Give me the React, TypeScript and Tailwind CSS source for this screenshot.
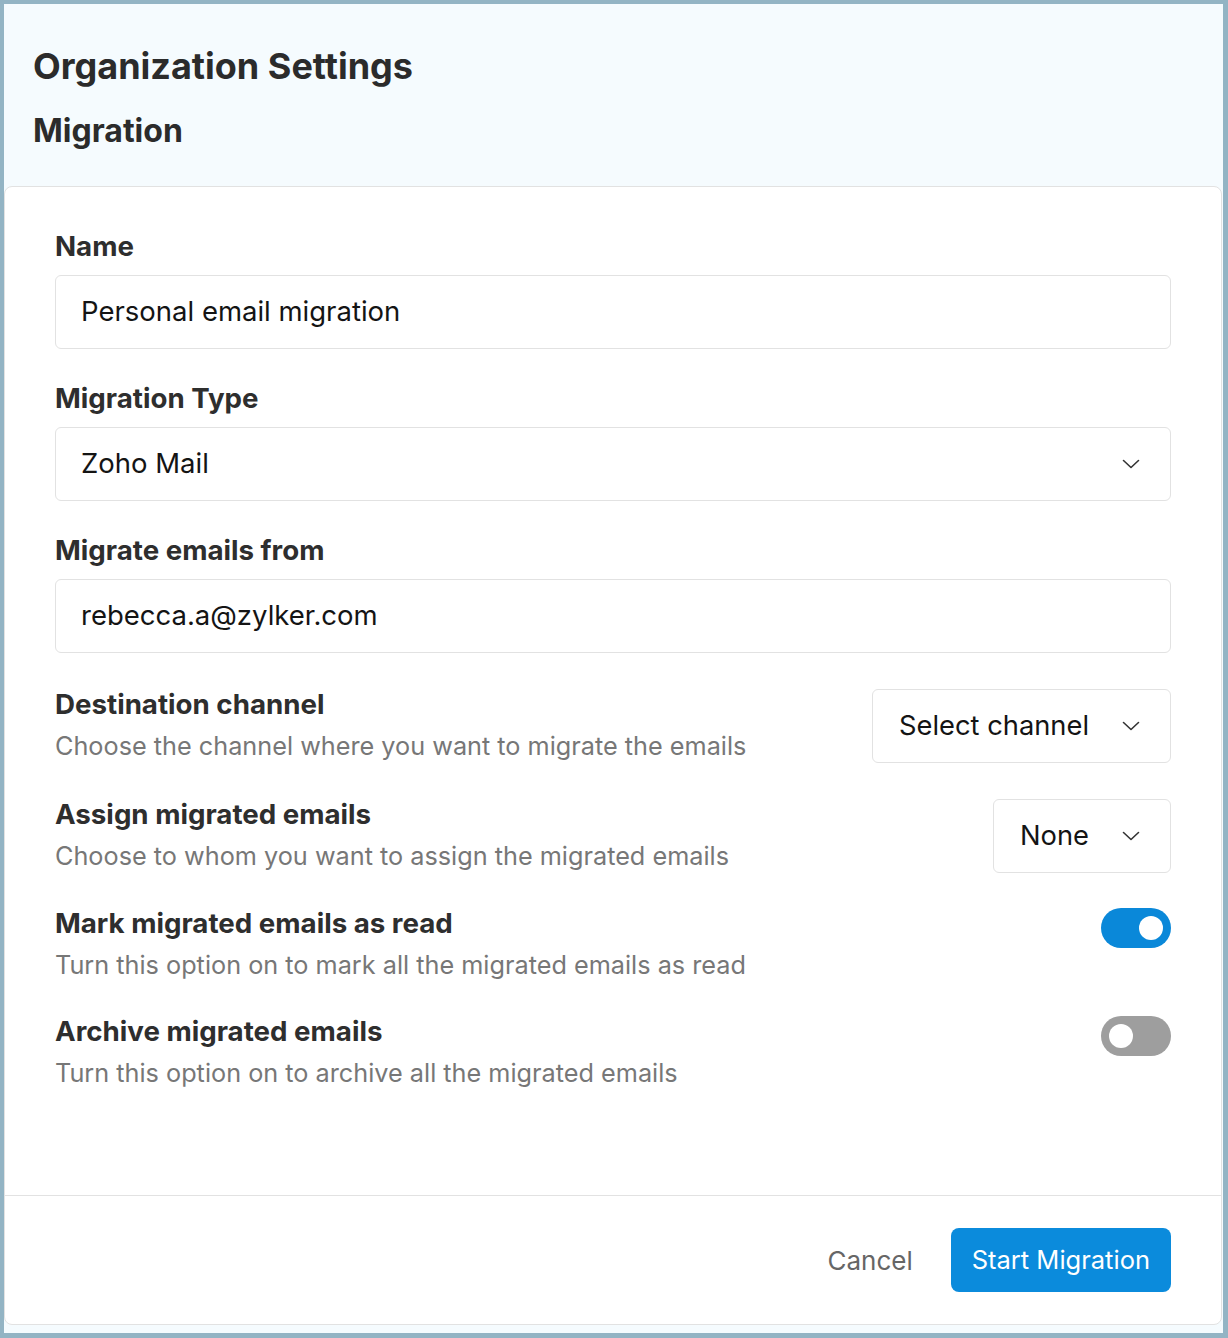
import React, { useState } from "react";

const FONT = { fontFamily: "Inter, 'Noto Sans', sans-serif" };

const Chevron = () => (
  <svg width="18" height="10" viewBox="0 0 18 10" fill="none" className="shrink-0">
    <path d="M1.5 1.5 L9 8.5 L16.5 1.5" stroke="#333" strokeWidth="1.6" strokeLinecap="round" strokeLinejoin="round" />
  </svg>
);

const Toggle = ({ on, onClick }: { on: boolean; onClick: () => void }) => (
  <button
    onClick={onClick}
    className={`relative h-[40px] w-[70px] shrink-0 rounded-full ${on ? "bg-[#0a88d9]" : "bg-[#9e9e9e]"}`}
  >
    <span
      className={`absolute top-[8px] h-[24px] w-[24px] rounded-full bg-white ${on ? "left-[38px]" : "left-[8px]"}`}
    />
  </button>
);

const Field = ({ label, value, select, first }: { label: string; value: string; select?: boolean; first?: boolean }) => (
  <div className={first ? "" : "mt-[33px]"}>
    <div className="text-[27.7px] font-bold leading-[32px] text-[#2e2e2e]">{label}</div>
    <div className="mt-[13px] flex h-[74px] items-center justify-between rounded-md border border-[#e2e2e2] bg-white pl-[25px] pr-[30px]">
      <span className="text-[27.5px] text-[#141414]">{value}</span>
      {select && <Chevron />}
    </div>
  </div>
);

const OptionRow = ({ title, sub, right, className }: { title: string; sub: string; right: React.ReactNode; className?: string }) => (
  <div className={`flex items-start justify-between ${className ?? ""}`}>
    <div>
      <div className="text-[27.7px] font-bold leading-[30px] text-[#2e2e2e]">{title}</div>
      <div className="mt-[10px] text-[25.25px] leading-[34px] text-[#777777]">{sub}</div>
    </div>
    {right}
  </div>
);

const Dropdown = ({ value }: { value: string }) => (
  <div className="flex h-[74px] items-center rounded-md border border-[#e2e2e2] bg-white pl-[26px] pr-[30px]">
    <span className="text-[27.3px] text-[#141414]">{value}</span>
    <span className="ml-[33px]">
      <Chevron />
    </span>
  </div>
);

export default function App() {
  const [markRead, setMarkRead] = useState(true);
  const [archive, setArchive] = useState(false);

  return (
    <div
      style={FONT}
      className="flex h-[1338px] w-[1228px] flex-col border-b-[5px] border-l-4 border-r-[5px] border-t-4 border-[#93b4c4] bg-[#f5fbfe]"
    >
      {/* header */}
      <div className="h-[182px] shrink-0 px-[29px] pt-[40px]">
        <h1 className="text-[36px] font-bold leading-[44px] text-[#2b2b2b]">Organization Settings</h1>
        <h2 className="mt-[23px] text-[32px] font-bold leading-[40px] text-[#2b2b2b]">Migration</h2>
      </div>

      {/* card */}
      <div className="mb-[8px] mr-[1px] flex flex-1 flex-col rounded-lg border border-[#e2e2e2] bg-white">
        <div className="flex-1 px-[50px] pt-[43px]">
          <Field first label="Name" value="Personal email migration" />
          <Field label="Migration Type" value="Zoho Mail" select />
          <Field label="Migrate emails from" value="rebecca.a@zylker.com" />

          <OptionRow
            className="mt-[36px]"
            title="Destination channel"
            sub="Choose the channel where you want to migrate the emails"
            right={<Dropdown value="Select channel" />}
          />
          <OptionRow
            className="mt-[36px]"
            title="Assign migrated emails"
            sub="Choose to whom you want to assign the migrated emails"
            right={<Dropdown value="None" />}
          />
          <OptionRow
            className="mt-[35px]"
            title="Mark migrated emails as read"
            sub="Turn this option on to mark all the migrated emails as read"
            right={<Toggle on={markRead} onClick={() => setMarkRead(!markRead)} />}
          />
          <OptionRow
            className="mt-[34px]"
            title="Archive migrated emails"
            sub="Turn this option on to archive all the migrated emails"
            right={<Toggle on={archive} onClick={() => setArchive(!archive)} />}
          />
        </div>

        {/* footer */}
        <div className="flex h-[129px] shrink-0 items-center justify-end gap-[38px] border-t border-[#e2e2e2] px-[50px]">
          <button className="text-[26px] text-[#666666]">Cancel</button>
          <button className="h-[64px] rounded-lg bg-[#0b8bdc] px-[21px] text-[25.5px] text-white">Start Migration</button>
        </div>
      </div>
    </div>
  );
}
